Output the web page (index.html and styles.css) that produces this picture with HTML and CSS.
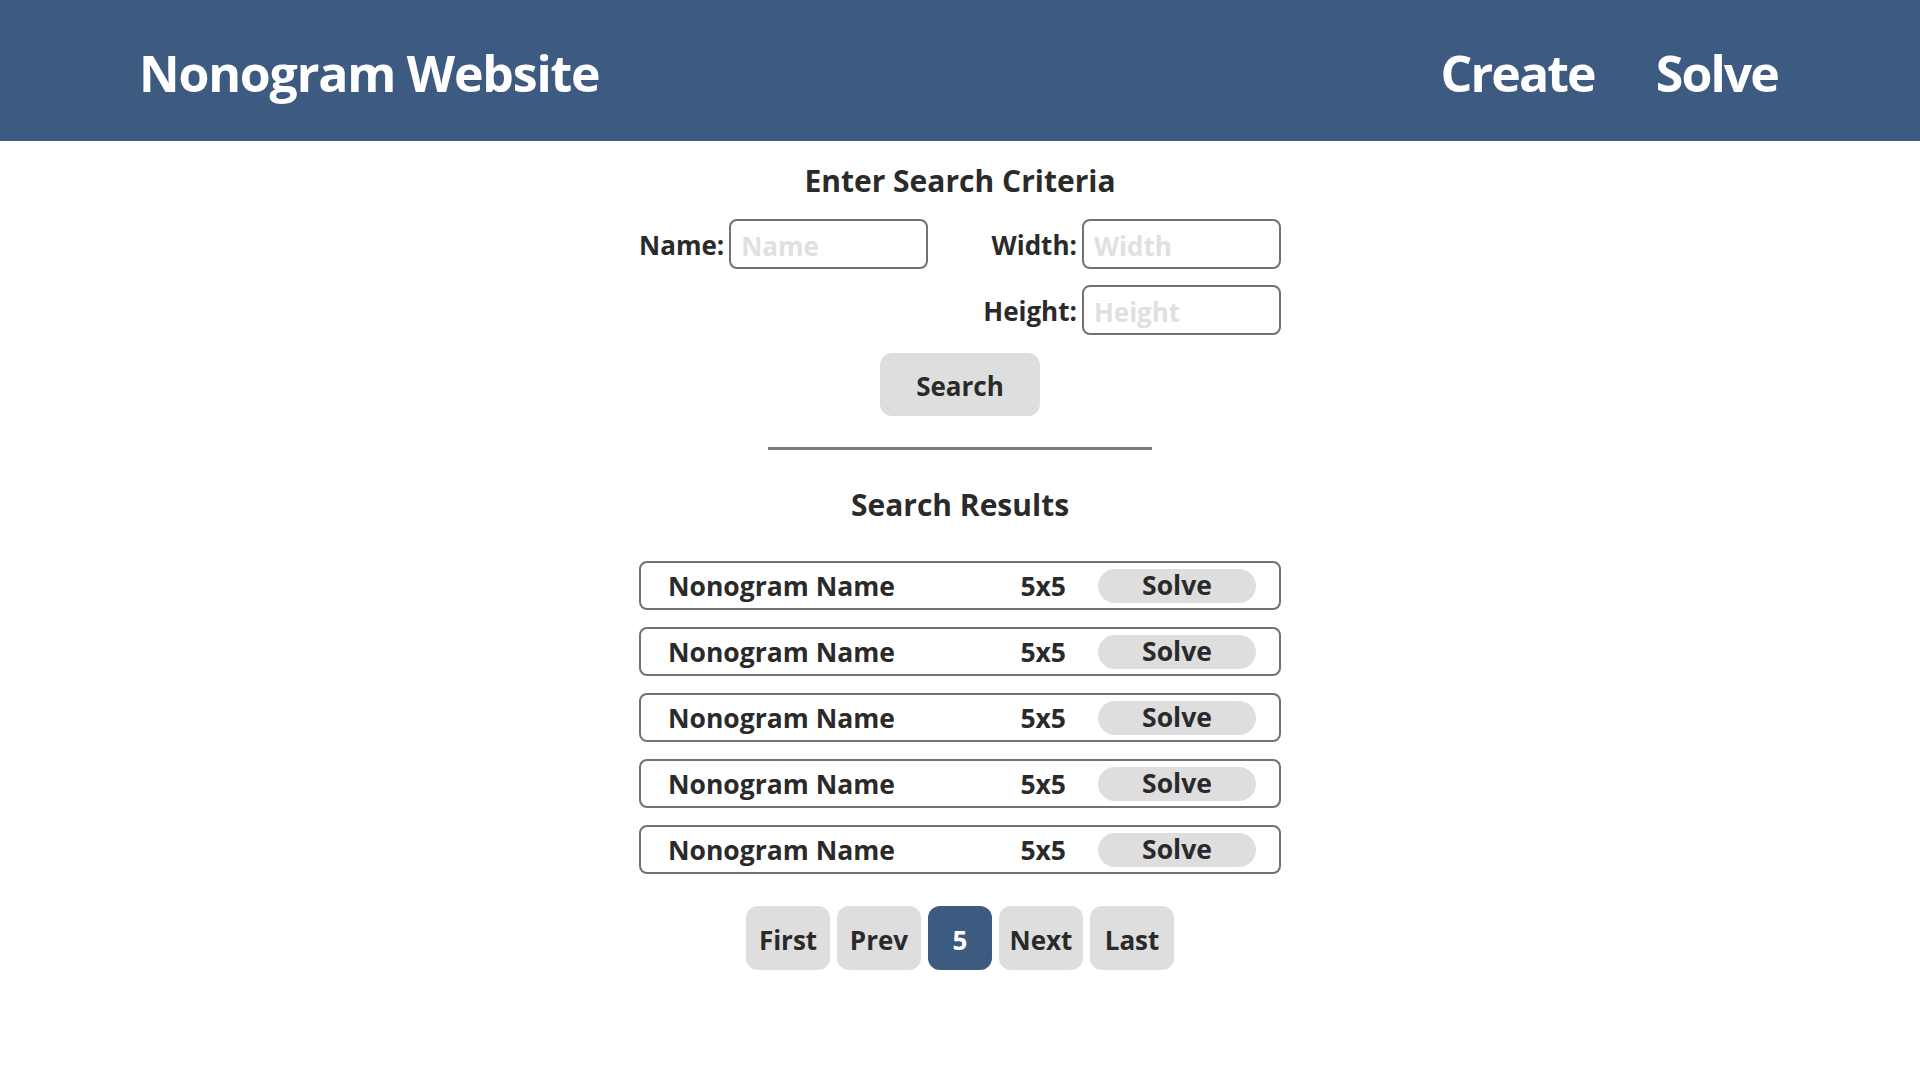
FILE: index.html
```html
<!DOCTYPE html>
<html lang="en">
<head>
<meta charset="utf-8">
<title>Nonogram Website</title>
<link rel="stylesheet" href="styles.css">
</head>
<body>
<header class="topbar">
  <div class="brand">Nonogram Website</div>
  <nav class="nav">
    <a class="nav-link" href="#">Create</a>
    <a class="nav-link" href="#">Solve</a>
  </nav>
</header>
<main class="page">
  <section class="search">
    <h2 class="section-title">Enter Search Criteria</h2>
    <form class="criteria">
      <label class="field-label" for="f-name">Name:</label>
      <input class="field-input" id="f-name" type="text" placeholder="Name">
      <label class="field-label col-right" for="f-width">Width:</label>
      <input class="field-input" id="f-width" type="text" placeholder="Width">
      <label class="field-label col-right row-two" for="f-height">Height:</label>
      <input class="field-input row-two" id="f-height" type="text" placeholder="Height">
    </form>
    <button class="btn search-btn" type="button">Search</button>
  </section>
  <hr class="divider">
  <section class="results">
    <h2 class="section-title results-title">Search Results</h2>
    <ul class="result-list">
      <li class="result-row"><span class="result-name">Nonogram Name</span><span class="result-size">5x5</span><button class="solve-btn" type="button">Solve</button></li>
      <li class="result-row"><span class="result-name">Nonogram Name</span><span class="result-size">5x5</span><button class="solve-btn" type="button">Solve</button></li>
      <li class="result-row"><span class="result-name">Nonogram Name</span><span class="result-size">5x5</span><button class="solve-btn" type="button">Solve</button></li>
      <li class="result-row"><span class="result-name">Nonogram Name</span><span class="result-size">5x5</span><button class="solve-btn" type="button">Solve</button></li>
      <li class="result-row"><span class="result-name">Nonogram Name</span><span class="result-size">5x5</span><button class="solve-btn" type="button">Solve</button></li>
    </ul>
    <nav class="pager">
      <button class="btn page-btn" type="button">First</button>
      <button class="btn page-btn" type="button">Prev</button>
      <button class="btn page-btn page-current" type="button">5</button>
      <button class="btn page-btn" type="button">Next</button>
      <button class="btn page-btn" type="button">Last</button>
    </nav>
  </section>
</main>
</body>
</html>
```

FILE: styles.css
```css
* {
  box-sizing: border-box;
}

html, body {
  margin: 0;
  padding: 0;
  background: #ffffff;
}

body {
  font-family: "Open Sans", "Noto Sans", "Liberation Sans", sans-serif;
  font-weight: 700;
  color: #2a2a2a;
  line-height: 1.2;
}

.topbar {
  height: 141px;
  background: #3d5a80;
  display: flex;
  align-items: center;
  justify-content: space-between;
  padding: 4px 142px 0 139px;
  color: #ffffff;
}

.brand {
  font-size: 50px;
  letter-spacing: -1.2px;
}

.nav {
  display: flex;
  gap: 61px;
}

.nav-link {
  color: #ffffff;
  text-decoration: none;
  font-size: 50px;
  letter-spacing: -1.9px;
}

.page {
  display: flex;
  flex-direction: column;
  align-items: center;
}

.search {
  display: flex;
  flex-direction: column;
  align-items: center;
}

.section-title {
  margin: 22px 0 0 0;
  font-size: 30px;
  font-weight: 700;
}

.criteria {
  margin-top: 20px;
  display: grid;
  grid-template-columns: auto 199px auto 199px;
  column-gap: 5px;
  row-gap: 16px;
  align-items: center;
}

.field-label {
  font-size: 26px;
  justify-self: end;
  padding-top: 3px;
}

.col-right {
  grid-column: 3;
  padding-left: 50px;
}

.row-two {
  grid-row: 2;
}

input.row-two {
  grid-column: 4;
}

.field-input {
  height: 50px;
  width: 199px;
  border: 2px solid #727272;
  border-radius: 8px;
  padding: 4px 10px 0 10px;
  font-family: inherit;
  font-weight: 700;
  font-size: 26px;
  color: #2a2a2a;
  background: #fff;
  outline: none;
}

.field-input::placeholder {
  color: #e0e0e0;
}

.btn {
  font-family: inherit;
  font-weight: 700;
  color: #2a2a2a;
  background: #dedede;
  border: none;
  cursor: pointer;
}

.search-btn {
  margin-top: 18px;
  width: 160px;
  height: 63px;
  border-radius: 12px;
  font-size: 26px;
  padding: 3px 0 0 0;
}

.divider {
  width: 384px;
  margin: 31px 0 0 0;
  border: none;
  border-top: 3px solid #7a7a7a;
}

.results {
  display: flex;
  flex-direction: column;
  align-items: center;
}

.results-title {
  margin-top: 37px;
  font-size: 30px;
}

.result-list {
  list-style: none;
  margin: 38px 0 0 0;
  padding: 0;
  display: flex;
  flex-direction: column;
  gap: 17px;
}

.result-row {
  width: 642px;
  height: 49px;
  border: 2px solid #727272;
  border-radius: 8px;
  display: grid;
  grid-template-columns: 1fr auto 158px;
  column-gap: 32px;
  align-items: center;
  padding: 3px 23px 0 27px;
  font-size: 26.5px;
}

.solve-btn {
  height: 34px;
  border-radius: 17px;
  border: none;
  background: #dedede;
  font-family: inherit;
  font-weight: 700;
  font-size: 26.5px;
  color: #2a2a2a;
  padding: 0;
  line-height: 1;
  margin-top: -3px;
}

.pager {
  margin-top: 32px;
  display: flex;
  gap: 7px;
}

.page-btn {
  height: 64px;
  width: 84px;
  border-radius: 12px;
  font-size: 26px;
  padding: 3px 0 0 0;
}

.page-current {
  width: 64px;
  background: #3d5a80;
  color: #ffffff;
}
```
